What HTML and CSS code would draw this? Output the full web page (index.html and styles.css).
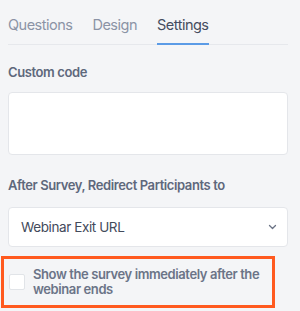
FILE: index.html
```html
<!DOCTYPE html>
<html lang="en">
<head>
  <meta charset="UTF-8">
  <title>Survey Settings</title>
  <link rel="stylesheet" href="styles.css">
</head>
<body>

  <div class="panel">
    <div class="tabs">
      <div class="tab">Questions</div>
      <div class="tab">Design</div>
      <div class="tab active">Settings</div>
    </div>

    <label class="field-label">Custom code</label>
    <div class="code-box"></div>

    <label class="field-label redirect-label">After Survey, Redirect Participants to</label>
    <div class="select">
      <span>Webinar Exit URL</span>
      <svg class="chevron" width="9" height="6" viewBox="0 0 9 6">
        <path d="M1.5 1.5l3 3 3-3" fill="none" stroke="#6b7385" stroke-width="1.3" stroke-linecap="round" stroke-linejoin="round"/>
      </svg>
    </div>

    <div class="highlight">
      <span class="checkbox"></span>
      <span class="check-text">Show the survey immediately after the webinar ends</span>
    </div>
  </div>

</body>
</html>
```

FILE: styles.css
```css
body {
  margin: 0;
  background: #f4f5f7;
  font-family: Inter, "Noto Sans", sans-serif;
}
.panel {
  width: 280px;
  padding-left: 8px;
  display: flex;
  flex-direction: column;
}
.tabs {
  display: flex;
  gap: 20px;
  border-bottom: 1px solid #e6e8ec;
  padding-top: 15px;
}
.tab {
  font-size: 14.5px;
  line-height: 20px;
  letter-spacing: -0.5px;
  color: #8b93a5;
  padding-bottom: 8px;
  border-bottom: 2px solid transparent;
  margin-bottom: -1px;
}
.tab.active {
  color: #454d5f;
  border-bottom-color: #5b9be6;
}
.field-label {
  font-size: 13px;
  font-weight: 600;
  line-height: 18px;
  letter-spacing: -0.4px;
  color: #5e687c;
  margin-top: 18px;
}
.code-box {
  margin-top: 11px;
  height: 61px;
  background: #fff;
  border: 1px solid #e4e6ea;
  border-radius: 4px;
}
.redirect-label {
  margin-top: 21px;
}
.select {
  margin-top: 13px;
  height: 38px;
  background: #fff;
  border: 1px solid #e4e6ea;
  border-radius: 4px;
  display: flex;
  align-items: center;
  justify-content: space-between;
  padding: 0 10px 0 12px;
  font-size: 13.5px;
  letter-spacing: -0.4px;
  color: #434a5b;
}
.highlight {
  margin: 9px 0 0 -7px;
  width: 263px;
  height: 46px;
  border: 3px solid #ff5a1f;
  display: flex;
  align-items: center;
  gap: 8px;
  padding-left: 5px;
}
.checkbox {
  width: 14px;
  height: 14px;
  flex-shrink: 0;
  background: #fff;
  border: 1px solid #e1e4e8;
  border-radius: 2px;
}
.check-text {
  font-size: 13px;
  font-weight: 600;
  line-height: 15px;
  letter-spacing: -0.4px;
  color: #6b7487;
}
```
